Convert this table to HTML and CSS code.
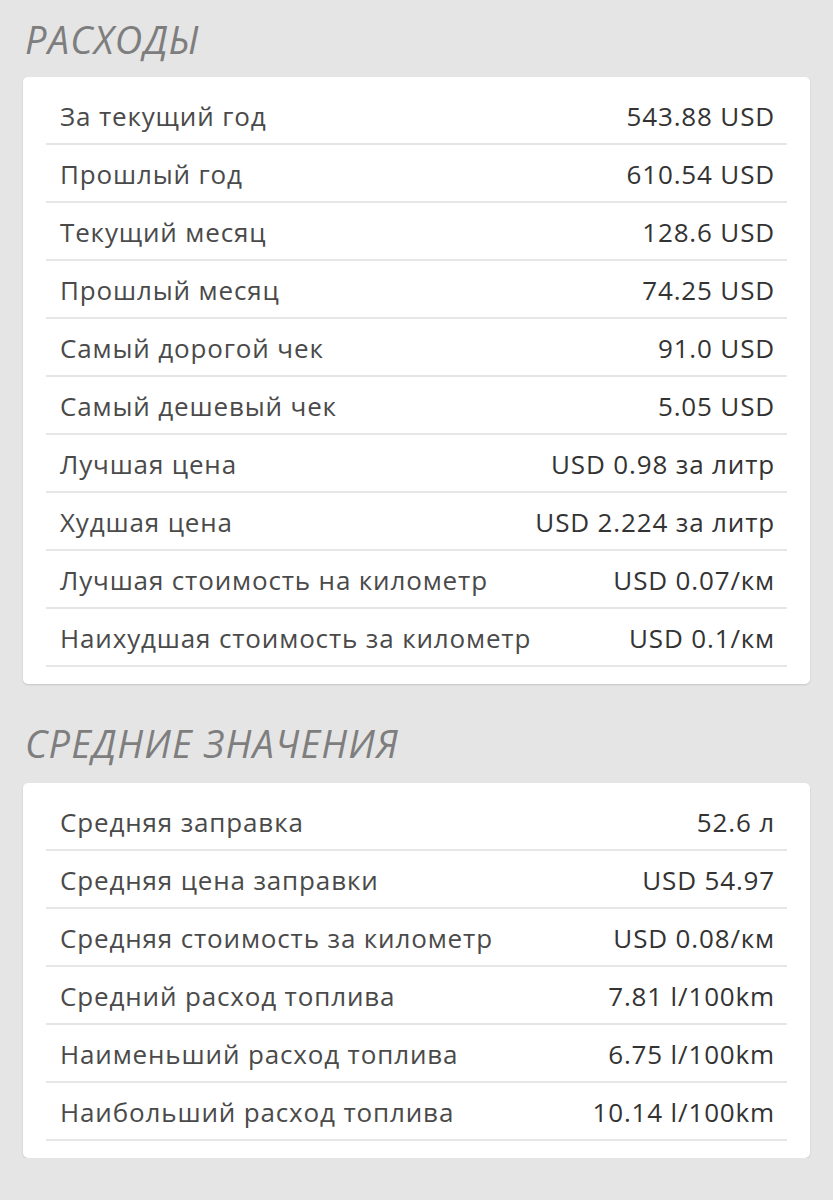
FILE: index.html
```html
<!DOCTYPE html>
<html lang="ru">
<head>
<meta charset="utf-8">
<link rel="stylesheet" href="styles.css">
</head>
<body>
<section class="section">
  <h2 class="title">РАСХОДЫ</h2>
  <div class="card">
    <div class="row"><span class="label">За текущий год</span><span class="value">543.88 USD</span></div>
    <div class="row"><span class="label">Прошлый год</span><span class="value">610.54 USD</span></div>
    <div class="row"><span class="label">Текущий месяц</span><span class="value">128.6 USD</span></div>
    <div class="row"><span class="label">Прошлый месяц</span><span class="value">74.25 USD</span></div>
    <div class="row"><span class="label">Самый дорогой чек</span><span class="value">91.0 USD</span></div>
    <div class="row"><span class="label">Самый дешевый чек</span><span class="value">5.05 USD</span></div>
    <div class="row"><span class="label">Лучшая цена</span><span class="value">USD 0.98 за литр</span></div>
    <div class="row"><span class="label">Худшая цена</span><span class="value">USD 2.224 за литр</span></div>
    <div class="row"><span class="label">Лучшая стоимость на километр</span><span class="value">USD 0.07/км</span></div>
    <div class="row"><span class="label">Наихудшая стоимость за километр</span><span class="value">USD 0.1/км</span></div>
  </div>
</section>
<section class="section">
  <h2 class="title">СРЕДНИЕ ЗНАЧЕНИЯ</h2>
  <div class="card">
    <div class="row"><span class="label">Средняя заправка</span><span class="value">52.6 л</span></div>
    <div class="row"><span class="label">Средняя цена заправки</span><span class="value">USD 54.97</span></div>
    <div class="row"><span class="label">Средняя стоимость за километр</span><span class="value">USD 0.08/км</span></div>
    <div class="row"><span class="label">Средний расход топлива</span><span class="value">7.81 l/100km</span></div>
    <div class="row"><span class="label">Наименьший расход топлива</span><span class="value">6.75 l/100km</span></div>
    <div class="row"><span class="label">Наибольший расход топлива</span><span class="value">10.14 l/100km</span></div>
  </div>
</section>
</body>
</html>
```
FILE: styles.css
```css
html, body {
  margin: 0;
  padding: 0;
  background: #e5e5e5;
}
body {
  font-family: "Open Sans", "DejaVu Sans", sans-serif;
  color: #3d3d3d;
}
.section {
  padding: 0 23px;
}
.title {
  margin: 0;
  padding: 17px 0 0 2px;
  height: 77px;
  box-sizing: border-box;
  font-size: 38px;
  line-height: 44px;
  font-weight: 400;
  font-style: italic;
  color: #7e7e7e;
  letter-spacing: 1.2px;
}
.section + .section .title {
  padding-top: 37px;
  height: 99px;
}
.card {
  background: #ffffff;
  border-radius: 5px;
  box-shadow: 0 1px 2px rgba(0, 0, 0, 0.14);
  padding: 10px 23px 17px;
}
.row {
  display: flex;
  justify-content: space-between;
  align-items: center;
  height: 58px;
  box-sizing: border-box;
  padding: 2px 12px 0 14px;
  border-bottom: 2px solid #e6e6e6;
  font-size: 26px;
  letter-spacing: 0.85px;
}
.label {
  color: #4a4a4a;
}
.value {
  color: #333333;
}
```
